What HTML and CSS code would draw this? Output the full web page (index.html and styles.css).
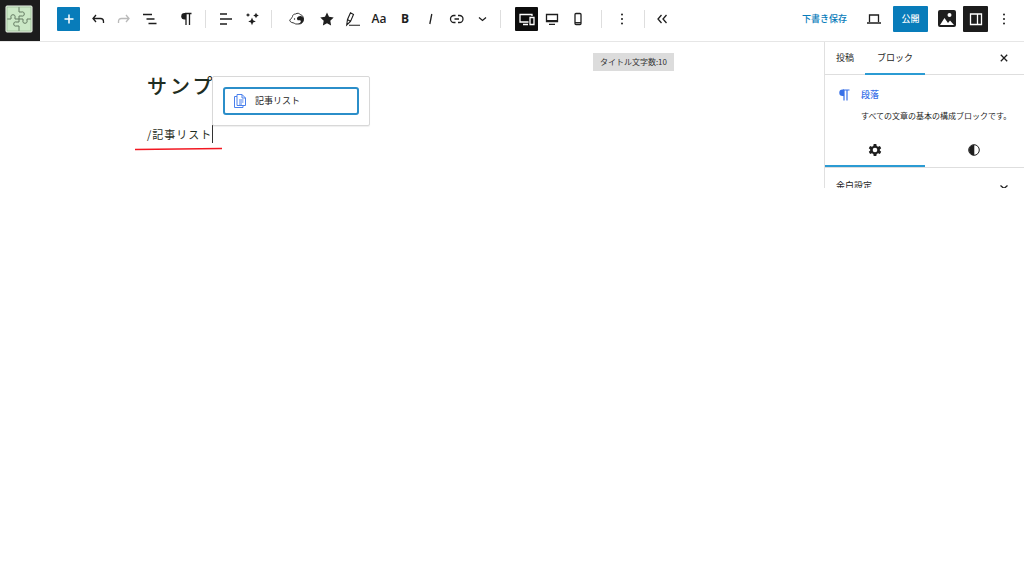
FILE: index.html
```html
<!DOCTYPE html>
<html lang="ja">
<head>
<meta charset="utf-8">
<meta name="viewport" content="width=device-width, initial-scale=1">
<title>投稿の編集</title>
<link rel="stylesheet" href="styles.css">
</head>
<body>
<header class="topbar">
  <a class="site-logo" href="#" aria-label="サイト">
    <svg width="28" height="28" viewBox="0 0 28 28"><rect x="1" y="1" width="26" height="26" rx="1" fill="#cbe8c6" stroke="#f1f8ee"/><path d="M2 14h4v-2c-1-3 5-3 4 0v2h4v-3h3c3 1 3-5 0-4h-3V2M14 14v3h-3c-3-1-3 5 0 4h3v5M14 14h4v2c-1 3 5 3 4 0v-2h4" fill="none" stroke="#647b62" stroke-linejoin="round"/><rect x="2" y="2" width="24" height="24" fill="none" stroke="#8fae8b" stroke-width=".6"/></svg>
  </a>
  <div class="tools tools-document">
    <button class="add" aria-label="追加"><svg width="16" height="16" viewBox="0 0 16 16"><path d="M8 3.500v9M3.500 8h9" stroke="#fff" stroke-width="1.500"/></svg></button>
    <button class="tool" aria-label="元に戻す"><svg width="16" height="16" viewBox="0 0 16 16"><path d="M6 4 3 7.500 6 11M3 7.500h7.500q3 0 3 3V12" class="line"/></svg></button>
    <button class="tool faded" aria-label="やり直す"><svg width="16" height="16" viewBox="0 0 16 16"><path d="m10 4 3 3.500L10 11M13 7.500H5.500q-3 0-3 3V12" class="line"/></svg></button>
    <button class="tool" aria-label="概観"><svg width="16" height="16" viewBox="0 0 16 16"><path d="M1 3.500h9M4.500 8h8M6.500 12.500h8" class="line"/></svg></button>
  </div>
  <div class="tools tools-type">
    <button class="tool" aria-label="段落"><svg width="16" height="16" viewBox="0 0 16 16"><path d="M7 2.500h6.500M8 2.500v11.500M11.500 2.500v11.500" class="line"/><path d="M8 2H6.500a3.200 3.200 0 0 0 0 6.500H8z"/></svg></button>
  </div>
  <div class="tools tools-align">
    <button class="tool" aria-label="配置"><svg width="16" height="16" viewBox="0 0 16 16"><path d="M2 3h7M2 8h12M2 13h7" class="line"/></svg></button>
    <button class="tool" aria-label="AI"><svg width="16" height="16" viewBox="0 0 16 16"><path d="m8 6.500 1.100 2.800 2.700 1.100-2.700 1.100L8 14.300l-1.100-2.800-2.700-1.100 2.700-1.100zM12 1.700l.9 1.900 1.900.9-1.900.9-.9 1.900-.9-1.900-1.900-.9 1.900-.9zM4 1.900l.7 1.400 1.400.7-1.400.7L4 6.100l-.7-1.400L1.900 4l1.400-.7z"/></svg></button>
  </div>
  <div class="tools tools-format">
    <button class="tool" aria-label="装飾"><svg width="18" height="16" viewBox="0 0 18 16"><path d="M1.800 8.800C3.500 8 3.500 7 4.500 5.500 4.500 4 6 3 7.500 3c2-1.300 4-.8 5 .8 2 .4 3 2 3 4.200 0 3-1.800 5-4.500 5H8c-1 0-1.500-1-3-1.200-2-.2-3.500-1.600-3.200-3z" fill="#fff" stroke="#1e1e1e" stroke-width=".9"/><path d="M9 7c1-2.500 6-3 6.500.8.400 3.500-2 5.400-5.500 5.200 2.500-.8 3.400-2.500 2.500-3.500-1-.9-2.500.3-3-.5C9.200 8.400 8.800 7.700 9 7z"/><circle cx="6.500" cy="8" r=".7"/></svg></button>
    <button class="tool star" aria-label="お気に入り"><svg width="16" height="16" viewBox="0 0 16 16"><path d="m8 1.500 2 4.300 4.700.6-3.400 3.300.8 4.700L8 12.200l-4.100 2.200.8-4.700L1.300 6.400 6 5.800z"/></svg></button>
    <button class="tool" aria-label="マーカー"><svg width="16" height="16" viewBox="0 0 16 16"><path d="M5.500 1.800 2.500 8.500 1.700 14l3.800-3.500L8.500 3.500zM2.500 8.500l3 2M4 14.200h11" fill="none" stroke="#1e1e1e" stroke-width="1.100"/></svg></button>
    <button class="tool letter" aria-label="文字サイズ">Aa</button>
    <button class="tool letter letter-bold" aria-label="太字">B</button>
    <button class="tool" aria-label="斜体"><svg width="16" height="16" viewBox="0 0 16 16"><path d="M8.800 3 6.800 13" class="line"/></svg></button>
    <button class="tool" aria-label="リンク"><svg width="16" height="16" viewBox="0 0 16 16"><path d="M6.500 4.500H5a3.500 3.500 0 0 0 0 7h1.500M9 4.500h1.500a3.500 3.500 0 0 1 0 7H9M5.500 8H10" class="line"/></svg></button>
    <button class="tool" aria-label="さらに表示"><svg width="16" height="16" viewBox="0 0 16 16"><path d="m4 6.500 3.500 3 3.500-3" class="line"/></svg></button>
  </div>
  <div class="tools tools-device">
    <button class="tool pressed" aria-label="全デバイス"><svg width="18" height="16" viewBox="0 0 18 16"><path d="M10.500 11H2V3.500h12V5M5 13.500h5M12 6.500h4v7h-4z" fill="none" stroke="#fff" stroke-width="1.300"/></svg></button>
    <button class="tool" aria-label="デスクトップ"><svg width="16" height="16" viewBox="0 0 16 16"><path d="M2.500 3.500h11v7h-11zM2.500 9.700h11M5 13.300h6" class="line"/></svg></button>
    <button class="tool" aria-label="モバイル"><svg width="16" height="16" viewBox="0 0 16 16"><rect x="5" y="2.500" width="6" height="11" rx="1" class="line"/><path d="M5 11.700h6" class="line"/></svg></button>
  </div>
  <div class="tools tools-options">
    <button class="tool" aria-label="オプション"><svg width="16" height="16" viewBox="0 0 16 16"><circle cx="8" cy="3.500" r="1"/><circle cx="8" cy="8" r="1"/><circle cx="8" cy="12.500" r="1"/></svg></button>
  </div>
  <div class="tools tools-collapse">
    <button class="tool" aria-label="折りたたむ"><svg width="16" height="16" viewBox="0 0 16 16"><path d="M7.500 4 4 8l3.500 4M12.500 4 9 8l3.500 4" class="line"/></svg></button>
  </div>
  <div class="actions">
    <button class="draft">下書き保存</button>
    <button class="tool preview" aria-label="プレビュー"><svg width="16" height="16" viewBox="0 0 16 16"><path d="M3.500 11V4h9v7M1 12h14" class="line"/></svg></button>
    <button class="publish">公開</button>
    <button class="picture" aria-label="画像"><svg width="18" height="18" viewBox="0 0 18 18"><rect width="18" height="17" rx="2"/><path d="m2 15 4.500-7L10 13l2-2.500 4 4.500z" fill="#fff"/><circle cx="11.500" cy="5" r="2" fill="#fff"/></svg></button>
    <button class="panel-toggle" aria-label="設定"><svg width="16" height="16" viewBox="0 0 16 16"><path d="M2.500 3h11v10.500h-11zM9.500 3v10.500" fill="none" stroke="#fff" stroke-width="1.300"/></svg></button>
    <button class="tool" aria-label="その他"><svg width="16" height="16" viewBox="0 0 16 16"><circle cx="8" cy="3.500" r="1"/><circle cx="8" cy="8" r="1"/><circle cx="8" cy="12.500" r="1"/></svg></button>
  </div>
</header>
<div class="workspace">
  <main class="canvas">
    <article class="document">
      <h1 class="title">サンプ</h1>
      <div class="block">
        <p class="paragraph">/記事リスト</p>
        <svg class="underline" width="88" height="4" viewBox="0 0 88 4"><path d="M0 2.500 87 1.500" stroke="#f21822" stroke-width="1.600"/></svg>
        <div class="suggestions">
          <button class="suggestion">
            <svg width="14" height="16" viewBox="0 0 14 16"><path d="M4 1.500h5l3.500 3.500v7.500H4zM9 1.500V5h3.500M4 3.500H1.500v11h8.500v-2M6 7h4.500M6 9h4.500M6 11h3" fill="none" stroke="#4a80ec"/></svg>
            記事リスト
          </button>
        </div>
      </div>
    </article>
    <span class="counter">タイトル文字数:10</span>
  </main>
  <aside class="sidebar">
    <div class="tabs">
      <button class="tab">投稿</button>
      <button class="tab tab-active">ブロック</button>
      <button class="close" aria-label="閉じる"><svg width="10" height="10" viewBox="0 0 10 10"><path d="m1.800 1.800 6.400 6.400m0-6.400L1.800 8.200" class="line"/></svg></button>
    </div>
    <section class="card">
      <svg width="14" height="14" viewBox="0 0 14 14"><path d="M5 2h6.500M6 2v10.500M9 2v10.500" fill="none" stroke="#3871e8" stroke-width="1.200"/><path d="M6 1.500H4.500a3.200 3.200 0 0 0 0 6.400H6z" fill="#3871e8"/></svg>
      <div>
        <h2 class="card-title">段落</h2>
        <p class="card-text">すべての文章の基本の構成ブロックです。</p>
      </div>
    </section>
    <div class="views">
      <button class="view view-active" aria-label="設定"><svg width="14" height="14" viewBox="0 0 14 14"><path d="M5.700 1h2.600l.4 1.900 1.400.8 1.800-.6 1.300 2.200L11.800 6.500v1l1.400 1.200-1.300 2.200-1.800-.6-1.400.8-.4 1.900H5.700l-.4-1.900-1.400-.8-1.800.6L.8 8.700l1.400-1.200v-1L.8 5.300l1.300-2.200 1.800.6 1.400-.8z"/><circle cx="7" cy="7" r="2.300" fill="#fff"/></svg></button>
      <button class="view" aria-label="スタイル"><svg width="12" height="12" viewBox="0 0 12 12"><circle cx="6" cy="6" r="5.300" fill="#fff" stroke="#1e1e1e"/><path d="M6.300.7a5.300 5.300 0 0 0 0 10.600z"/></svg></button>
    </div>
    <button class="section">余白設定<svg width="10" height="10" viewBox="0 0 10 10"><path d="m1.500 3.500 3.500 3 3.500-3" class="line"/></svg></button>
  </aside>
</div>
</body>
</html>
```
FILE: styles.css
```css
* {
  box-sizing: border-box;
}

body {
  margin: 0;
  background: #fff;
  color: #1e1e1e;
  font-family: "Noto Sans CJK JP", "Liberation Sans", sans-serif;
  font-size: 9px;
  line-height: 14px;
}

button {
  display: flex;
  align-items: center;
  justify-content: center;
  flex: none;
  padding: 0;
  border: 0;
  background: none;
  color: inherit;
  font: inherit;
  white-space: nowrap;
}

svg {
  display: block;
  flex: none;
  fill: #1e1e1e;
}

.line {
  fill: none;
  stroke: #1e1e1e;
  stroke-width: 1.3;
}

.topbar {
  display: flex;
  align-items: center;
  height: 42px;
  padding-bottom: 3px;
  border-bottom: 1px solid #e6e6e6;
}

.site-logo {
  display: flex;
  flex: none;
  align-self: flex-start;
  width: 40px;
  height: 41px;
  padding: 5px;
  background: #1c1c1c;
}

.tools {
  display: flex;
  align-items: center;
  flex: none;
  gap: 2px;
  height: 18px;
}

.tool {
  width: 24px;
  height: 24px;
}

.faded {
  opacity: 0.3;
}

.tools-document {
  padding-left: 17px;
}

.add {
  width: 23px;
  height: 24px;
  margin-right: 4px;
  border-radius: 1px;
  background: #087cba;
}

.tools-type {
  padding: 0 7px 0 12px;
}

.tools-align,
.tools-format,
.tools-device,
.tools-options,
.tools-collapse {
  border-left: 1px solid #dedede;
}

.tools-align {
  padding: 0 7px 0 8px;
}

.tools-format {
  padding: 0 5px 0 13px;
}

.star {
  margin-left: 4px;
}

.letter {
  font-family: "Open Sans", sans-serif;
  font-weight: 600;
  font-size: 12px;
}

.letter-bold {
  font-weight: 700;
}

.tools-device {
  padding: 0 11px 0 14px;
}

.pressed {
  width: 23px;
  border-radius: 1px;
  background: #0d0d0d;
}

.tools-options {
  padding: 0 10px 0 8px;
}

.tools-collapse {
  padding-left: 5px;
}

.actions {
  display: flex;
  align-items: center;
  flex: none;
  margin-left: auto;
  padding-right: 8px;
}

.draft {
  color: #087cba;
  font-weight: 500;
}

.preview {
  margin: 0 7px 0 15px;
}

.publish {
  width: 35px;
  height: 26px;
  border-radius: 1px;
  background: #087cba;
  color: #fff;
  font-weight: 500;
}

.picture {
  margin: 0 7px 0 10px;
}

.panel-toggle {
  width: 25px;
  height: 26px;
  margin-right: 4px;
  border-radius: 1px;
  background: #1c1c1c;
}

.workspace {
  display: flex;
}

.canvas {
  display: flex;
  align-items: flex-start;
  justify-content: space-between;
  flex: 1;
  min-width: 0;
  padding-right: 150px;
}

.document {
  padding: 29px 0 0 147px;
  color: #1f2d22;
}

.title {
  margin: 0 0 24px;
  font-weight: 500;
  font-size: 20px;
  line-height: 30px;
  letter-spacing: 3px;
}

.block {
  position: relative;
}

.paragraph {
  width: max-content;
  margin: 0;
  border-right: 1px solid #333;
  font-size: 11px;
  line-height: 18px;
  letter-spacing: 1px;
}

.underline {
  position: absolute;
  top: 22px;
  left: -12px;
}

.suggestions {
  position: absolute;
  top: -49px;
  left: 65px;
  width: 158px;
  padding: 10px;
  border: 1px solid #d8d8d8;
  border-radius: 2px;
  background: #fff;
  box-shadow: 0 1px 1px #0001;
}

.suggestion {
  justify-content: flex-start;
  gap: 8px;
  width: 100%;
  height: 28px;
  padding-left: 8px;
  border: 2px solid #2b8ec9;
  border-radius: 3px;
  color: #1e1e1e;
}

.counter {
  flex: none;
  margin-top: 11px;
  padding: 2px 7px;
  background: #dcdcdc;
  color: #333;
  font-size: 8px;
}

.sidebar {
  flex: none;
  width: 200px;
  border-left: 1px solid #e0e0e0;
}

.tabs {
  display: flex;
  height: 33px;
  border-bottom: 1px solid #dedede;
}

.tab {
  height: 32px;
  padding: 0 11px;
}

.tab-active {
  height: 33px;
  padding: 1px 12px 0;
  border-bottom: 2px solid #2b9bd3;
}

.close {
  margin: 0 15px 0 auto;
}

.card {
  display: flex;
  align-items: flex-start;
  gap: 9px;
  padding: 13px 0 0 13px;
}

.card-title {
  margin: 0 0 7px;
  color: #3871e8;
  font-weight: 500;
  font-size: 9px;
}

.card-text {
  margin: 0;
  font-size: 8px;
  white-space: nowrap;
}

.views {
  display: flex;
  margin-top: 10px;
  border-bottom: 1px solid #dedede;
}

.view {
  flex: 1;
  height: 34px;
}

.view-active {
  margin-bottom: -1px;
  padding-top: 2px;
  border-bottom: 2px solid #2b9bd3;
}

.section {
  align-items: flex-start;
  justify-content: space-between;
  width: 100%;
  height: 20px;
  padding: 11px 15px 0 11px;
  overflow: hidden;
}

.section svg {
  margin-top: 3px;
}
```
